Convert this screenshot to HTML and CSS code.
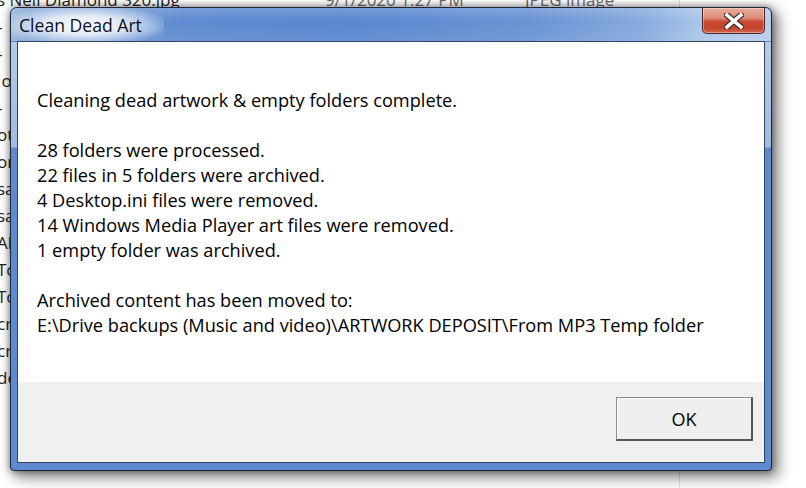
FILE: index.html
```html
<!DOCTYPE html>
<html>
<head>
<meta charset="utf-8">
<link rel="stylesheet" href="styles.css">
</head>
<body>
<div class="files">
  <div class="row"><span class="c-name">s Neil Diamond 320.jpg</span><span class="c-date">9/1/2020 1:27 PM</span><span class="c-type">JPEG image</span><span class="c-rest"></span></div>
  <div class="row"><span class="c-name">-</span><span class="c-date"></span><span class="c-type"></span><span class="c-rest"></span></div>
  <div class="row"><span class="c-name">-</span><span class="c-date"></span><span class="c-type"></span><span class="c-rest"></span></div>
  <div class="row"><span class="c-name">&nbsp;o</span><span class="c-date"></span><span class="c-type"></span><span class="c-rest"></span></div>
  <div class="row"><span class="c-name">-</span><span class="c-date"></span><span class="c-type"></span><span class="c-rest"></span></div>
  <div class="row"><span class="c-name">ot</span><span class="c-date"></span><span class="c-type"></span><span class="c-rest"></span></div>
  <div class="row"><span class="c-name">or</span><span class="c-date"></span><span class="c-type"></span><span class="c-rest"></span></div>
  <div class="row"><span class="c-name">sa</span><span class="c-date"></span><span class="c-type"></span><span class="c-rest"></span></div>
  <div class="row"><span class="c-name">sa</span><span class="c-date"></span><span class="c-type"></span><span class="c-rest"></span></div>
  <div class="row"><span class="c-name">Al</span><span class="c-date"></span><span class="c-type"></span><span class="c-rest"></span></div>
  <div class="row"><span class="c-name">To</span><span class="c-date"></span><span class="c-type"></span><span class="c-rest"></span></div>
  <div class="row"><span class="c-name">To</span><span class="c-date"></span><span class="c-type"></span><span class="c-rest"></span></div>
  <div class="row"><span class="c-name">cr</span><span class="c-date"></span><span class="c-type"></span><span class="c-rest"></span></div>
  <div class="row"><span class="c-name">cri</span><span class="c-date"></span><span class="c-type"></span><span class="c-rest"></span></div>
  <div class="row"><span class="c-name">de</span><span class="c-date"></span><span class="c-type"></span><span class="c-rest"></span></div>
  <div class="row"><span class="c-name"></span><span class="c-date"></span><span class="c-type"></span><span class="c-rest"></span></div>
  <div class="row"><span class="c-name"></span><span class="c-date"></span><span class="c-type"></span><span class="c-rest"></span></div>
  <div class="row"><span class="c-name"></span><span class="c-date"></span><span class="c-type"></span><span class="c-rest"></span></div>
  <div class="row"><span class="c-name"></span><span class="c-date"></span><span class="c-type"></span><span class="c-rest"></span></div>
</div>

<div class="dialog">
  <div class="titlebar">
    <span class="title">Clean Dead Art</span>
    <div class="close">
      <svg width="20" height="16" viewBox="0 0 20 16">
        <path d="M3 2 L17 14 M17 2 L3 14" stroke="#3b2f33" stroke-width="6" stroke-linecap="square" fill="none"/>
        <path d="M3 2 L17 14 M17 2 L3 14" stroke="#ffffff" stroke-width="3.6" stroke-linecap="square" fill="none"/>
      </svg>
    </div>
  </div>
  <div class="client">
    <div class="message">
      <p>Cleaning dead artwork &amp; empty folders complete.</p>
      <p>28 folders were processed.<br>22 files in 5 folders were archived.<br>4 Desktop.ini files were removed.<br>14 Windows Media Player art files were removed.<br>1 empty folder was archived.</p>
      <p>Archived content has been moved to:<br>E:\Drive backups (Music and video)\ARTWORK DEPOSIT\From MP3 Temp folder</p>
    </div>
    <div class="footer">
      <button class="ok">OK</button>
    </div>
  </div>
</div>
</body>
</html>
```

FILE: styles.css
```css
html, body {
  margin: 0;
  padding: 0;
}

body {
  width: 806px;
  height: 488px;
  overflow: hidden;
  background: #ffffff;
  font-family: "Open Sans", "Noto Sans", sans-serif;
  position: relative;
}

.files {
  margin-top: -14px;
  font-size: 17px;
  color: #2a2a2a;
}

.row {
  display: grid;
  grid-template-columns: 325px 200px 155px 1fr;
  height: 27px;
  line-height: 27px;
  white-space: nowrap;
}

.c-name {
  margin-left: -3px;
  color: #1e1e1e;
}

.c-date,
.c-type {
  color: #6a6a6a;
}

.c-type {
  border-right: 1px solid #dce4ee;
}

.dialog {
  position: absolute;
  left: 10px;
  top: 7px;
  width: 762px;
  height: 464px;
  box-sizing: border-box;
  border: 1px solid #1c2636;
  border-radius: 7px 7px 4px 4px;
  padding: 0 6px 7px 6px;
  display: flex;
  flex-direction: column;
  background:
    linear-gradient(to bottom, rgba(255,255,255,0) 34px, rgba(255,255,255,0.55) 34px, rgba(255,255,255,0.42) 139px, rgba(255,255,255,0) 140px),
    #5e8ad0;
  box-shadow: 0 0 6px 1px rgba(0,0,0,0.35), 5px 5px 14px 2px rgba(0,0,0,0.45);
}

.titlebar {
  height: 33px;
  margin: 0 -6px;
  padding: 0 6px 0 0;
  display: flex;
  align-items: flex-start;
  border-radius: 6px 6px 0 0;
  background:
    linear-gradient(to bottom, rgba(255,255,255,0.18), rgba(255,255,255,0) 40%, rgba(255,255,255,0.08)),
    linear-gradient(to right, #9ab5dd 0px, #7ea2d8 20px, #5e8bd0 170px, #5786cf 330px, #6893d4 520px, #86a9de 630px, #aac5ea 690px, #b7cdee 760px);
}

.title {
  padding: 1px 22px 0 8px;
  height: 32px;
  line-height: 32px;
  font-size: 17.6px;
  color: #0b1020;
  background: radial-gradient(ellipse 58% 62% at 48% 52%, rgba(255,255,255,0.95) 0%, rgba(255,255,255,0.8) 45%, rgba(255,255,255,0.35) 78%, rgba(255,255,255,0) 100%);
}

.close {
  margin-left: auto;
  width: 63px;
  height: 26px;
  box-sizing: border-box;
  border: 1px solid #4a2420;
  border-top: none;
  border-radius: 0 0 5px 5px;
  background: linear-gradient(to bottom, #e8ab9c 0%, #dc8c78 40%, #c9472e 55%, #c4452d 80%, #d2694f 100%);
  box-shadow: inset 0 0 0 1px rgba(255,255,255,0.35);
  display: flex;
  align-items: center;
  justify-content: center;
}

.close svg {
  display: block;
}

.client {
  flex: 1;
  display: flex;
  flex-direction: column;
  border: 1px solid #34465e;
  background: #ffffff;
}

.message {
  flex: 1;
  padding: 46px 20px 0 19px;
  font-size: 18.2px;
  line-height: 25px;
  color: #000000;
}

.message p {
  margin: 0 0 25px 0;
}

.footer {
  height: 80px;
  box-sizing: border-box;
  background: #f0f0f0;
  display: flex;
  justify-content: flex-end;
  align-items: flex-start;
  padding: 15px 11px 0 0;
}

.ok {
  width: 137px;
  height: 44px;
  box-sizing: border-box;
  border-style: solid;
  border-width: 1px 2px 2px 1px;
  border-color: #8a8a8a #555555 #555555 #8a8a8a;
  background: #efefef;
  box-shadow: inset 1px 1px 0 #ffffff;
  font-family: "Open Sans", "Noto Sans", sans-serif;
  font-size: 18px;
  color: #000000;
  padding: 0;
}
```
